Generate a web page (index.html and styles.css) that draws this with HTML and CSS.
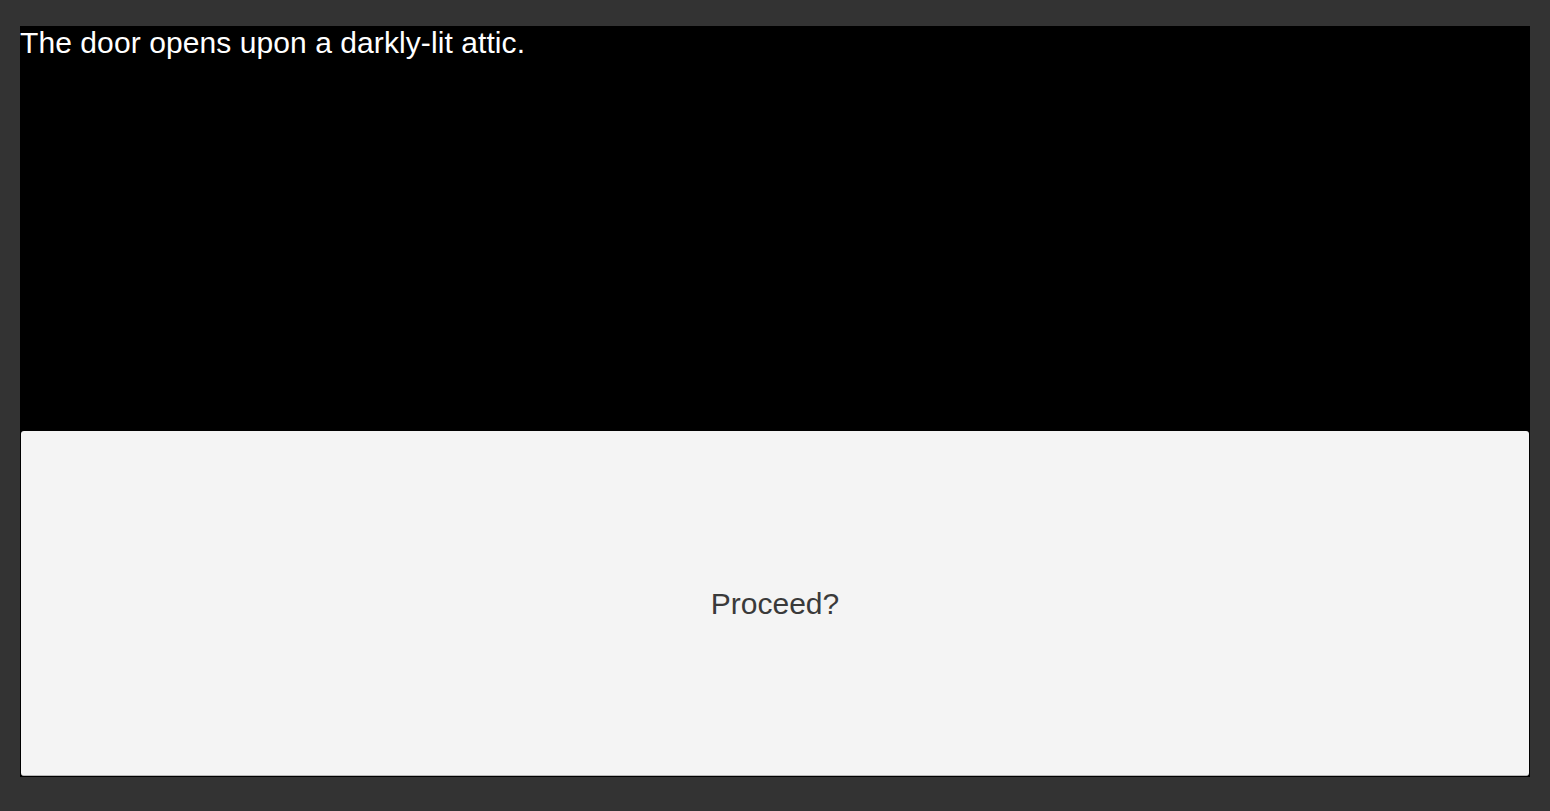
FILE: index.html
```html
<!DOCTYPE html>
<html>
<head>
<meta charset="utf-8">
<link rel="stylesheet" href="styles.css">
</head>
<body>
<div class="stage">
  <div class="narration">The door opens upon a darkly-lit attic.</div>
  <div class="choice"><span>Proceed?</span></div>
</div>
</body>
</html>
```
FILE: styles.css
```css
html, body {
  margin: 0;
  height: 100%;
  background: #333333;
}
body {
  padding: 26px 20px 34px 20px;
  box-sizing: border-box;
  font-family: "Liberation Sans", Arial, sans-serif;
}
.stage {
  height: 100%;
  background: #000;
  display: flex;
  flex-direction: column;
  padding: 0 0 1px 0;
  box-sizing: border-box;
}
.narration {
  height: 405px;
  color: #fff;
  font-size: 30px;
  line-height: 34px;
  letter-spacing: 0.08px;
  flex: none;
}
.choice {
  flex: 1;
  margin: 0 1px;
  padding-top: 2px;
  background: #f4f4f4;
  border-radius: 3px;
  border-bottom: 1px solid #b8b8b8;
  display: flex;
  align-items: center;
  justify-content: center;
  color: #3a3a3a;
  font-size: 30px;
}
```
